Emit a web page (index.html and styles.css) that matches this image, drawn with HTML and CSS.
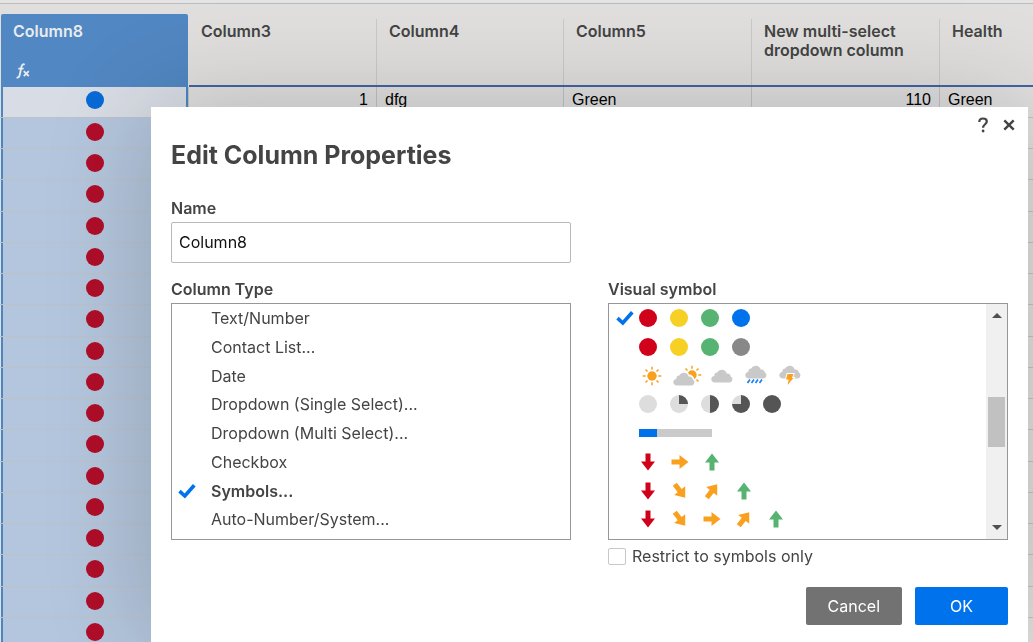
FILE: index.html
```
<!DOCTYPE html>
<html lang="en">
<head>
<meta charset="utf-8">
<title>Edit Column Properties</title>
<link rel="stylesheet" href="styles.css">
<script src="app.js" defer></script>
</head>
<body>
<svg class="defs" aria-hidden="true">
  <symbol id="check" viewBox="0 0 18 16"><path d="M1.5 8.2 6.8 13 16.3 2.2" fill="none" stroke="#0073ec" stroke-width="3.6"/></symbol>
  <symbol id="arrow" viewBox="0 0 18 18"><path d="M.5 6.500h8V2L17.500 9 8.500 16v-4.500h-8z" fill="currentColor"/></symbol>
  <symbol id="cloud" viewBox="0 0 22 14"><path d="M4 13.500C1.700 13.500.3 12 .3 10.200.3 8.500 1.600 7.200 3.300 7 3.200 4.500 4.700 3.400 6.300 3.500 7.300 1.600 9 .7 10.800.7c2.700 0 4.600 1.700 5 4 .5-.2 2.200-.1 3 .7.8.7 1 1.600.9 2.200 1.200.5 1.700 1.500 1.700 2.700 0 1.800-1.300 3.200-3 3.200z" fill="#c9c9c9"/></symbol>
  <symbol id="sun" viewBox="0 0 20 20"><circle cx="10" cy="10" r="4.700" fill="#f9a11f"/><path d="M10 .7v3M10 16.300v3M.7 10h3M16.300 10h3M3.500 3.500l2 2M14.500 14.500l2 2M16.500 3.500l-2 2M5.500 14.500l-2 2" stroke="#f9a11f" stroke-width="1.500"/></symbol>
</svg>

<main class="sheet">
  <table class="grid">
    <colgroup><col class="c-first"><col class="c-wide"><col class="c-mid"><col class="c-wide"><col class="c-wide"><col></colgroup>
    <thead>
      <tr>
        <th class="selected" scope="col"><div class="head"><span>Column8</span>
          <svg class="fx" viewBox="0 0 14 16" role="img" aria-label="Formula"><path d="M8.700 1.800C7.200.7 6 1.600 5.600 3.300L3.600 12.400C3.200 14.200 2.100 15 .6 14.300M2.300 5.600h5.300" fill="none" stroke="#e8ebef" stroke-width="1.900"/><path d="M7.800 8.200l5 5M12.800 8.200l-5 5" stroke="#e8ebef" stroke-width="1.900"/></svg></div></th>
        <th scope="col"><div class="head">Column3</div></th>
        <th scope="col"><div class="head">Column4</div></th>
        <th scope="col"><div class="head">Column5</div></th>
        <th scope="col"><div class="head">New multi-select dropdown column</div></th>
        <th scope="col"><div class="head">Health</div></th>
      </tr>
    </thead>
    <tbody id="rows">
      <tr><td><span class="status blue"></span></td><td class="num">1</td><td>dfg</td><td>Green</td><td class="num">110</td><td>Green</td></tr>
    </tbody>
  </table>
</main>

<section class="dialog" role="dialog" aria-labelledby="title">
  <div class="tools">
    <button type="button" aria-label="Help"><svg width="12" height="16" viewBox="0 0 12 16"><path d="M2.300 5C2.300 2.600 3.900 1.500 6 1.500s3.800 1.200 3.800 3.100C9.800 7.200 6.100 7.400 6.100 10.700" fill="none" stroke="#444" stroke-width="2.200"/><circle cx="6.100" cy="14" r="1.400" fill="#444"/></svg></button>
    <button type="button" aria-label="Close"><svg width="12" height="12" viewBox="0 0 12 12"><path d="M1.300 1.300l9.400 9.400M10.700 1.300l-9.400 9.400" stroke="#444" stroke-width="2.400"/></svg></button>
  </div>
  <h1 id="title">Edit Column Properties</h1>
  <form class="fields">
    <div class="field name">
      <label for="name">Name</label>
      <input id="name" type="text" value="Column8">
    </div>
    <div class="field">
      <span class="label" id="type-label">Column Type</span>
      <ul class="list types" role="listbox" aria-labelledby="type-label">
        <li role="option">Text/Number</li>
        <li role="option">Contact List...</li>
        <li role="option">Date</li>
        <li role="option">Dropdown (Single Select)...</li>
        <li role="option">Dropdown (Multi Select)...</li>
        <li role="option">Checkbox</li>
        <li role="option" class="chosen" aria-selected="true"><svg class="tick"><use href="#check"/></svg>Symbols...</li>
        <li role="option">Auto-Number/System...</li>
      </ul>
    </div>
    <div class="field">
      <span class="label" id="symbol-label">Visual symbol</span>
      <div class="list scroller">
        <ul class="symbols" role="listbox" aria-labelledby="symbol-label">
          <li role="option" aria-selected="true" aria-label="Red, yellow, green, blue"><svg class="tick"><use href="#check"/></svg><i class="dot red"></i><i class="dot yellow"></i><i class="dot green"></i><i class="dot blue"></i></li>
          <li role="option" aria-label="Red, yellow, green, gray"><i class="dot red"></i><i class="dot yellow"></i><i class="dot green"></i><i class="dot gray"></i></li>
          <li role="option" aria-label="Weather" class="weather">
            <svg width="26" height="24" viewBox="0 0 26 24"><use href="#sun" x="3" y="2" width="20" height="20"/></svg>
            <svg width="30" height="24" viewBox="0 0 30 24"><use href="#sun" x="9" y="1" width="20" height="20"/><path d="M8 8.500c3-2.500 7-1.500 8 2 3 0 5 2 5.500 5L22 22H8z" fill="#fff"/><use href="#cloud" x="0" y="8" width="22" height="14"/></svg>
            <svg width="26" height="24" viewBox="0 0 26 24"><use href="#cloud" x="0" y="5" width="22" height="14"/></svg>
            <svg width="26" height="24" viewBox="0 0 26 24"><use href="#cloud" x="0" y="1" width="22" height="14"/><path d="M5 15.500 2.500 19M9 15.500 6.500 19M13 15.500 10.500 19M17 15.500 14.500 19" stroke="#1682f0" stroke-width="1.700"/></svg>
            <svg width="26" height="24" viewBox="0 0 26 24"><use href="#cloud" x="0" y="1" width="22" height="14"/><path d="M8.500 10h6l-1.500 4h1.500L8.500 21l1.200-5.500H7z" fill="#f9a11f" stroke="#fff" stroke-width="2" paint-order="stroke"/></svg>
          </li>
          <li role="option" aria-label="Harvey balls"><i class="dot pie0"></i><i class="dot pie1"></i><i class="dot pie2"></i><i class="dot pie3"></i><i class="dot pie4"></i></li>
          <li role="option" aria-label="Progress bar"><i class="bar"></i></li>
          <li role="option" aria-label="Three arrows" class="arrows"><svg class="down"><use href="#arrow"/></svg><svg class="flat"><use href="#arrow"/></svg><svg class="up"><use href="#arrow"/></svg></li>
          <li role="option" aria-label="Four arrows" class="arrows"><svg class="down"><use href="#arrow"/></svg><svg class="fall"><use href="#arrow"/></svg><svg class="rise"><use href="#arrow"/></svg><svg class="up"><use href="#arrow"/></svg></li>
          <li role="option" aria-label="Five arrows" class="arrows"><svg class="down"><use href="#arrow"/></svg><svg class="fall"><use href="#arrow"/></svg><svg class="flat"><use href="#arrow"/></svg><svg class="rise"><use href="#arrow"/></svg><svg class="up"><use href="#arrow"/></svg></li>
        </ul>
        <div class="scrollbar" aria-hidden="true">
          <svg width="10" height="5"><path d="M0 5 5 0l5 5z" fill="#505050"/></svg>
          <div class="track"><div class="thumb"></div></div>
          <svg width="10" height="5"><path d="M0 0h10L5 5z" fill="#505050"/></svg>
        </div>
      </div>
      <div class="restrict"><input id="restrict" type="checkbox"><label for="restrict">Restrict to symbols only</label></div>
    </div>
    <div class="actions">
      <button type="button" class="btn cancel">Cancel</button>
      <button type="submit" class="btn ok">OK</button>
    </div>
  </form>
</section>
</body>
</html>
```
FILE: styles.css
```
* { box-sizing: border-box; }

body {
  margin: 0;
  background: #e0e0e0;
  color: #444;
  font: 16px/20px Inter, "Liberation Sans", sans-serif;
}

.defs { display: none; }
button { font: inherit; cursor: pointer; }

/* Sheet behind the dialog */
.sheet {
  height: 100vh;
  overflow: hidden;
  border-top: 3px solid #e4e4e4;
  background: #e0e0e0;
}
.grid {
  width: 100%;
  table-layout: fixed;
  border-collapse: separate;
  border-spacing: 0;
  border-top: 1px solid #bcbcbc;
}
.c-mid { width: 187px; }
.c-wide { width: 188px; }
.c-first { width: 189px; }

th {
  height: 83px;
  padding: 15px 0 0;
  vertical-align: top;
  text-align: left;
  font-weight: 600;
  line-height: 19px;
  background: #e0dfdd;
  border-bottom: 2px solid #4464a2;
}
.head {
  height: 66px;
  padding: 3px 12px 0;
  border-right: 1px solid #c9c9c9;
}
.selected {
  padding: 10px 1px 0;
  border-bottom: 0;
}
.selected .head {
  display: flex;
  flex-direction: column;
  justify-content: space-between;
  height: 73px;
  padding: 8px 12px;
  border: 0;
  border-radius: 2px 2px 0 0;
  background: #5187c2;
  color: #e8ebef;
}
th:last-child .head, td:last-child { border-right: 0; }
.fx { width: 14px; height: 16px; margin-left: 3px; }

td {
  height: 31px;
  padding: 0 8px;
  border-right: 1px solid #c2c2c2;
  border-bottom: 1px solid #c4c4c4;
  color: #000;
  font: 16px/18px "Liberation Sans", Arial, sans-serif;
}
tr:nth-child(4n) td { height: 32px; }
td:first-child {
  padding: 0 0 3px 2px;
  background: linear-gradient(to right, #e0e0e0 1px, #4a86c4 1px, #4a86c4 3px, #b4c6dd 3px, #b4c6dd 186px, #4a86c4 186px, #4a86c4 188px, #e0e0e0 188px);
  border-bottom-color: #bec2c8;
}
tbody tr:first-child td { padding-bottom: 4px; }
tbody tr:first-child td:first-child {
  background: linear-gradient(to right, #e0e0e0 1px, #4a86c4 1px, #4a86c4 3px, #d8dce4 3px, #d8dce4 186px, #4a86c4 186px, #4a86c4 188px, #e0e0e0 188px);
}
.num { text-align: right; }
.status {
  display: block;
  width: 18px;
  height: 18px;
  margin: 0 auto;
  border-radius: 50%;
  background: #b00e29;
}
.status.blue { background: #086ad6; }

/* Dialog */
.dialog {
  position: fixed;
  top: 107px;
  left: 151px;
  right: 5px;
  bottom: 0;
  padding: 10px 20px 0;
  background: #fff;
  box-shadow: 0 0 100px rgba(0, 0, 0, .2);
}
.tools {
  display: flex;
  justify-content: flex-end;
  gap: 14px;
  height: 16px;
  margin-right: -7px;
}
.tools button {
  display: flex;
  align-items: center;
  padding: 0;
  border: 0;
  background: none;
}
h1 {
  margin: 7px 0 28px;
  font: 700 25px/30px Inter, sans-serif;
}
.fields {
  display: grid;
  grid-template-columns: 1fr 1fr;
  column-gap: 37px;
}
.field { display: flex; flex-direction: column; }
.name {
  grid-column: 1;
  margin-bottom: 16px;
}
.name + .field { grid-column: 1; }
.name label, .label {
  margin-bottom: 4px;
  font-weight: 600;
}
.name input {
  width: 100%;
  height: 41px;
  padding: 0 7px 2px;
  border: 1px solid #b9b9b9;
  border-radius: 2px;
  color: #111;
  font: inherit;
}
.list {
  margin: 0;
  padding: 0;
  border: 1px solid #979797;
  list-style: none;
}
.list li {
  display: flex;
  align-items: center;
  height: 29px;
  padding-bottom: 2px;
}
.list li:nth-child(4n) { height: 28px; }
.types { align-self: stretch; padding-bottom: 5px; }
.types li { padding-left: 39px; }
.types .chosen { padding-left: 6px; font-weight: 600; }
.tick { flex: none; width: 18px; height: 16px; }
.types .tick { margin-right: 15px; }

.scroller { display: flex; justify-content: space-between; }
.symbols { margin: 0; padding: 0 0 5px; list-style: none; }
.symbols li { gap: 13px; padding-left: 30px; }
.symbols li[aria-selected] { padding-left: 7px; }
.symbols .tick { margin-right: -8px; }
.dot { width: 18px; height: 18px; border-radius: 50%; }
.red { background: #d0021b; }
.yellow { background: #f6d024; }
.green { background: #57b371; }
.blue { background: #0073ec; }
.gray { background: #888; }
.pie0 { background: #ddd; }
.pie1 { background: conic-gradient(#555 25%, #ddd 0); }
.pie2 { background: conic-gradient(#555 50%, #ddd 0); }
.pie3 { background: conic-gradient(#555 75%, #ddd 0); }
.pie4 { background: #555; }
.bar {
  width: 73px;
  height: 8px;
  background: linear-gradient(to right, #0073ec 25%, #cacaca 0);
}
.symbols .weather { gap: 8px; }
.symbols .arrows { gap: 14px; }
.arrows svg { width: 18px; height: 18px; color: #f9a11f; }
.arrows .down { color: #d0021b; transform: rotate(90deg); }
.arrows .up { color: #57b371; transform: rotate(-90deg); }
.arrows .fall { transform: rotate(52deg); }
.arrows .rise { transform: rotate(-52deg); }

.scrollbar {
  display: flex;
  flex-direction: column;
  align-items: center;
  width: 21px;
  padding: 9px 0;
  background: #f0f0f0;
}
.track { flex: 1; padding-top: 79px; }
.thumb { width: 17px; height: 50px; background: #c1c1c1; }

.restrict {
  display: flex;
  align-items: center;
  gap: 6px;
  margin-top: 6px;
}
.restrict input {
  appearance: none;
  width: 18px;
  height: 17px;
  margin: 0;
  border: 1px solid #c8c8c8;
  border-radius: 2px;
  background: #fff;
}
.actions {
  display: flex;
  grid-column: 2;
  justify-content: flex-end;
  gap: 13px;
  margin-top: 21px;
}
.btn {
  min-width: 93px;
  height: 38px;
  padding: 0 22px;
  border: 0;
  border-radius: 2px;
  color: #fff;
}
.cancel { background: #727272; }
.ok { background: #0073ec; }
```
FILE: app.js
```
const rows = document.getElementById("rows");
for (let i = 0; i < 17; i++) {
  const row = rows.insertRow();
  for (let c = 0; c < 6; c++) row.insertCell();
  row.cells[0].innerHTML = '<span class="status"></span>';
}
```
